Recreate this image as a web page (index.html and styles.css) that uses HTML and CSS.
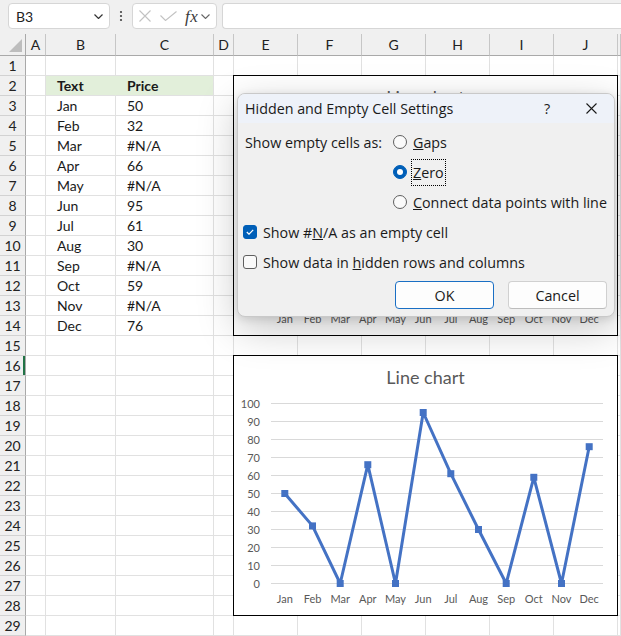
FILE: index.html
```html
<!DOCTYPE html>
<html lang="en">
<head>
<meta charset="utf-8">
<title>Hidden and Empty Cell Settings</title>
<link rel="stylesheet" href="styles.css">
</head>
<body>
<div class="app">
  <div class="fbar">
    <div class="namebox"><span>B3</span>
      <svg class="chev" width="9" height="5" viewBox="0 0 9 5"><path d="M0.5 0.5L4.5 4.5L8.5 0.5" fill="none" stroke="#333" stroke-width="1.2"/></svg>
    </div>
    <div class="vdots"><svg width="4" height="12" viewBox="0 0 4 12"><circle cx="2" cy="2" r="1.1" fill="#444"/><circle cx="2" cy="6" r="1.1" fill="#444"/><circle cx="2" cy="10" r="1.1" fill="#444"/></svg></div>
    <div class="fxbox">
      <svg class="ico-x" width="12" height="12" viewBox="0 0 12 12"><path d="M0.5 0.5L11.5 11.5M11.5 0.5L0.5 11.5" stroke="#c2c2c2" stroke-width="1.1" fill="none"/></svg>
      <svg class="ico-ok" width="17" height="10" viewBox="0 0 17 10"><path d="M0.5 4.5L5.5 9.5L16.5 0.5" stroke="#c2c2c2" stroke-width="1.1" fill="none"/></svg>
      <span class="fx">fx</span>
      <svg class="chev2" width="9" height="5" viewBox="0 0 9 5"><path d="M0.5 0.5L4.5 4.5L8.5 0.5" fill="none" stroke="#666" stroke-width="1.1"/></svg>
    </div>
    <div class="finput"></div>
  </div>

  <div class="sheet">
    <div class="row hdr"><span class="corner"><svg width="13" height="13" viewBox="0 0 13 13"><path d="M13 0V13H0Z" fill="#bdbdbd"/></svg></span><span>A</span><span>B</span><span>C</span><span>D</span><span>E</span><span>F</span><span>G</span><span>H</span><span>I</span><span>J</span><span></span></div>
    <div class="row"><span class="rh">1</span><span></span><span></span><span></span><span></span><span></span><span></span><span></span><span></span><span></span><span></span><span></span></div>
    <div class="row"><span class="rh">2</span><span></span><span class="t th fb">Text</span><span class="t th">Price</span><span></span><span></span><span></span><span></span><span></span><span></span><span></span><span></span></div>
    <div class="row"><span class="rh">3</span><span></span><span class="t">Jan</span><span class="t">50</span><span></span><span></span><span></span><span></span><span></span><span></span><span></span><span></span></div>
    <div class="row"><span class="rh">4</span><span></span><span class="t">Feb</span><span class="t">32</span><span></span><span></span><span></span><span></span><span></span><span></span><span></span><span></span></div>
    <div class="row"><span class="rh">5</span><span></span><span class="t">Mar</span><span class="t">#N/A</span><span></span><span></span><span></span><span></span><span></span><span></span><span></span><span></span></div>
    <div class="row"><span class="rh">6</span><span></span><span class="t">Apr</span><span class="t">66</span><span></span><span></span><span></span><span></span><span></span><span></span><span></span><span></span></div>
    <div class="row"><span class="rh">7</span><span></span><span class="t">May</span><span class="t">#N/A</span><span></span><span></span><span></span><span></span><span></span><span></span><span></span><span></span></div>
    <div class="row"><span class="rh">8</span><span></span><span class="t">Jun</span><span class="t">95</span><span></span><span></span><span></span><span></span><span></span><span></span><span></span><span></span></div>
    <div class="row"><span class="rh">9</span><span></span><span class="t">Jul</span><span class="t">61</span><span></span><span></span><span></span><span></span><span></span><span></span><span></span><span></span></div>
    <div class="row"><span class="rh">10</span><span></span><span class="t">Aug</span><span class="t">30</span><span></span><span></span><span></span><span></span><span></span><span></span><span></span><span></span></div>
    <div class="row"><span class="rh">11</span><span></span><span class="t">Sep</span><span class="t">#N/A</span><span></span><span></span><span></span><span></span><span></span><span></span><span></span><span></span></div>
    <div class="row"><span class="rh">12</span><span></span><span class="t">Oct</span><span class="t">59</span><span></span><span></span><span></span><span></span><span></span><span></span><span></span><span></span></div>
    <div class="row"><span class="rh">13</span><span></span><span class="t">Nov</span><span class="t">#N/A</span><span></span><span></span><span></span><span></span><span></span><span></span><span></span><span></span></div>
    <div class="row"><span class="rh">14</span><span></span><span class="t">Dec</span><span class="t">76</span><span></span><span></span><span></span><span></span><span></span><span></span><span></span><span></span></div>
    <div class="row"><span class="rh">15</span><span></span><span></span><span></span><span></span><span></span><span></span><span></span><span></span><span></span><span></span><span></span></div>
    <div class="row"><span class="rh sel">16</span><span></span><span></span><span></span><span></span><span></span><span></span><span></span><span></span><span></span><span></span><span></span></div>
    <div class="row"><span class="rh">17</span><span></span><span></span><span></span><span></span><span></span><span></span><span></span><span></span><span></span><span></span><span></span></div>
    <div class="row"><span class="rh">18</span><span></span><span></span><span></span><span></span><span></span><span></span><span></span><span></span><span></span><span></span><span></span></div>
    <div class="row"><span class="rh">19</span><span></span><span></span><span></span><span></span><span></span><span></span><span></span><span></span><span></span><span></span><span></span></div>
    <div class="row"><span class="rh">20</span><span></span><span></span><span></span><span></span><span></span><span></span><span></span><span></span><span></span><span></span><span></span></div>
    <div class="row"><span class="rh">21</span><span></span><span></span><span></span><span></span><span></span><span></span><span></span><span></span><span></span><span></span><span></span></div>
    <div class="row"><span class="rh">22</span><span></span><span></span><span></span><span></span><span></span><span></span><span></span><span></span><span></span><span></span><span></span></div>
    <div class="row"><span class="rh">23</span><span></span><span></span><span></span><span></span><span></span><span></span><span></span><span></span><span></span><span></span><span></span></div>
    <div class="row"><span class="rh">24</span><span></span><span></span><span></span><span></span><span></span><span></span><span></span><span></span><span></span><span></span><span></span></div>
    <div class="row"><span class="rh">25</span><span></span><span></span><span></span><span></span><span></span><span></span><span></span><span></span><span></span><span></span><span></span></div>
    <div class="row"><span class="rh">26</span><span></span><span></span><span></span><span></span><span></span><span></span><span></span><span></span><span></span><span></span><span></span></div>
    <div class="row"><span class="rh">27</span><span></span><span></span><span></span><span></span><span></span><span></span><span></span><span></span><span></span><span></span><span></span></div>
    <div class="row"><span class="rh">28</span><span></span><span></span><span></span><span></span><span></span><span></span><span></span><span></span><span></span><span></span><span></span></div>
    <div class="row"><span class="rh">29</span><span></span><span></span><span></span><span></span><span></span><span></span><span></span><span></span><span></span><span></span><span></span></div>
  </div>

  <svg class="defs" width="0" height="0">
    <defs>
      <symbol id="lc" viewBox="0 0 383 259">
        <text x="191.5" y="27.5" text-anchor="middle" font-family="Lato, sans-serif" font-size="18" fill="#595959">Line chart</text>
        <path d="M37 47.5H369M37 65.5H369M37 83.5H369M37 101.5H369M37 119.5H369M37 137.5H369M37 155.5H369M37 173.5H369M37 191.5H369M37 209.5H369M37 227.5H369" stroke="#d9d9d9" stroke-width="1" fill="none"/>
        <g font-family="Lato, sans-serif" font-size="11" fill="#595959" text-anchor="end">
          <text x="26" y="51.5">100</text>
          <text x="26" y="69.5">90</text>
          <text x="26" y="87.5">80</text>
          <text x="26" y="105.5">70</text>
          <text x="26" y="123.5">60</text>
          <text x="26" y="141.5">50</text>
          <text x="26" y="159.5">40</text>
          <text x="26" y="177.5">30</text>
          <text x="26" y="195.5">20</text>
          <text x="26" y="213.5">10</text>
          <text x="26" y="231.5">0</text>
        </g>
        <polyline points="50.8,137.5 78.5,169.9 106.2,227.5 133.8,108.7 161.5,227.5 189.2,56.5 216.8,117.7 244.5,173.5 272.2,227.5 299.8,121.3 327.5,227.5 355.2,90.7" fill="none" stroke="#4472c4" stroke-width="3" stroke-linejoin="round"/>
        <g fill="#4472c4">
          <rect x="47.3" y="134" width="7" height="7"/>
          <rect x="75" y="166.4" width="7" height="7"/>
          <rect x="102.7" y="224" width="7" height="7"/>
          <rect x="130.3" y="105.2" width="7" height="7"/>
          <rect x="158" y="224" width="7" height="7"/>
          <rect x="185.7" y="53" width="7" height="7"/>
          <rect x="213.3" y="114.2" width="7" height="7"/>
          <rect x="241" y="170" width="7" height="7"/>
          <rect x="268.7" y="224" width="7" height="7"/>
          <rect x="296.3" y="117.8" width="7" height="7"/>
          <rect x="324" y="224" width="7" height="7"/>
          <rect x="351.7" y="87.2" width="7" height="7"/>
        </g>
        <g font-family="Lato, sans-serif" font-size="11" fill="#595959" text-anchor="middle">
          <text x="50.8" y="247">Jan</text>
          <text x="78.5" y="247">Feb</text>
          <text x="106.2" y="247">Mar</text>
          <text x="133.8" y="247">Apr</text>
          <text x="161.5" y="247">May</text>
          <text x="189.2" y="247">Jun</text>
          <text x="216.8" y="247">Jul</text>
          <text x="244.5" y="247">Aug</text>
          <text x="272.2" y="247">Sep</text>
          <text x="299.8" y="247">Oct</text>
          <text x="327.5" y="247">Nov</text>
          <text x="355.2" y="247">Dec</text>
        </g>
      </symbol>
    </defs>
  </svg>

  <div class="chart c1"><svg width="383" height="259" viewBox="0 0 383 259"><use href="#lc"/></svg></div>
  <div class="chart c2"><svg width="383" height="259" viewBox="0 0 383 259"><use href="#lc"/></svg></div>

  <div class="dialog" role="dialog">
    <div class="dlg-title">
      <span class="dlg-name">Hidden and Empty Cell Settings</span>
      <span class="dlg-help">?</span>
      <span class="dlg-close"><svg width="11" height="11" viewBox="0 0 11 11"><path d="M0.5 0.5L10.5 10.5M10.5 0.5L0.5 10.5" stroke="#1a1a1a" stroke-width="1.1" fill="none"/></svg></span>
    </div>
    <div class="dlg-body">
      <div class="empty-opts">
        <span class="opt-label">Show empty cells as:</span>
        <span class="radio"><span class="rb"></span><span class="rl"><u>G</u>aps</span></span>
        <span class="radio on"><span class="rb"></span><span class="rl focus"><u>Z</u>ero</span></span>
        <span class="radio"><span class="rb"></span><span class="rl"><u>C</u>onnect data points with line</span></span>
      </div>
      <div class="check on"><span class="cb"><svg width="8" height="6" viewBox="0 0 8 6"><path d="M0.8 3L3 5.2L7.2 0.8" stroke="#fff" stroke-width="1.2" fill="none"/></svg></span><span>Show #<u>N</u>/A as an empty cell</span></div>
      <div class="check"><span class="cb"></span><span>Show data in <u>h</u>idden rows and columns</span></div>
      <div class="btns"><span class="btn primary">OK</span><span class="btn">Cancel</span></div>
    </div>
  </div>
</div>
</body>
</html>
```

FILE: styles.css
```css
* { box-sizing: border-box; }
html, body { margin: 0; padding: 0; }
body {
  background: #fff;
  font-family: Lato, "Liberation Sans", sans-serif;
  color: #1f1f1f;
  overflow: hidden;
}
.app {
  position: relative;
  width: 621px;
  height: 636px;
  overflow: hidden;
}

/* formula bar */
.fbar {
  height: 34px;
  background: #f0f0f0;
  display: flex;
  align-items: flex-start;
  padding: 3px 0 0 8px;
}
.namebox {
  width: 102px;
  height: 26px;
  background: #fff;
  border: 1px solid #d6d6d6;
  border-radius: 4px;
  display: flex;
  align-items: center;
  justify-content: space-between;
  padding: 0 6px 0 7px;
  font-size: 14px;
  color: #222;
}
.vdots {
  width: 22px;
  height: 26px;
  display: flex;
  align-items: center;
  justify-content: center;
}
.vdots svg { display: block; }
.fxbox {
  width: 85px;
  height: 26px;
  background: #fff;
  border: 1px solid #d6d6d6;
  border-radius: 4px;
  display: flex;
  align-items: center;
  padding-left: 6px;
}
.fxbox svg { display: block; flex: none; }
.ico-ok { margin-left: 9px; }
.fx {
  margin-left: 8px;
  font-family: "Liberation Serif", serif;
  font-style: italic;
  font-size: 17px;
  color: #3a3a3a;
  line-height: 1;
  letter-spacing: 0.5px;
}
.chev2 { margin-left: 3px; }
.finput {
  flex: 1;
  height: 26px;
  margin-left: 5px;
  background: #fff;
  border: 1px solid #d6d6d6;
  border-right: none;
  border-radius: 4px 0 0 4px;
}

/* grid */
.row {
  display: grid;
  grid-template-columns: 26px 20px 70px 98px 20px repeat(6, 64px) 1fr;
  height: 20px;
}
.row > span {
  border-right: 1px solid #e1e1e1;
  border-bottom: 1px solid #e1e1e1;
  font-size: 14px;
  line-height: 19px;
  white-space: nowrap;
  overflow: hidden;
}
.row > .rh {
  background: #f0f0f0;
  border-right-color: #a9a9a9;
  border-bottom-color: #d2d2d2;
  text-align: center;
  color: #222;
}
.row > .rh.sel { box-shadow: inset -2px 0 0 #217346; }
.row > .t { padding-left: 11px; color: #1a1a1a; }
.row > .th { background: #e2efda; font-weight: 700; }
.row > .fb { border-right-color: #e2efda; }

.hdr { height: 22px; background: #f0f0f0; }
.hdr > span {
  border-right-color: #c6c6c6;
  border-bottom: 1px solid #a9a9a9;
  text-align: center;
  line-height: 22px;
  color: #222;
}
.hdr > .corner {
  border-right-color: #a9a9a9;
  display: flex;
  align-items: flex-end;
  justify-content: flex-end;
  padding: 0 3px 3px 0;
}
.hdr > .corner svg { display: block; }

/* charts */
.defs { display: block; width: 0; height: 0; }
.chart {
  position: absolute;
  left: 233px;
  width: 385px;
  height: 261px;
  border: 1px solid #000;
  background: #fff;
}
.chart svg { display: block; }
.c1 { top: 75px; }
.c2 { top: 355px; }

/* dialog */
.dialog {
  position: absolute;
  left: 237px;
  top: 93px;
  width: 378px;
  height: 224px;
  background: #f0f0f0;
  border: 1px solid #c9c9c9;
  border-radius: 8px;
  overflow: hidden;
  box-shadow: 0 12px 40px rgba(0, 0, 0, 0.22), 0 2px 8px rgba(0, 0, 0, 0.12);
  font-family: "Open Sans", "Noto Sans", sans-serif;
  font-size: 14.3px;
  color: #1a1a1a;
}
.dlg-title {
  height: 29px;
  background: #eef2f9;
  display: flex;
  align-items: center;
  padding-left: 7px;
}
.dlg-name { flex: 1; white-space: nowrap; }
.dlg-help { width: 20px; text-align: center; margin-right: 29px; }
.dlg-close {
  width: 11px;
  margin-right: 17px;
  display: flex;
}
.dlg-close svg { display: block; }
.dlg-body { padding: 4px 0 0 7px; }
.empty-opts {
  display: grid;
  grid-template-columns: 148px 1fr;
  grid-auto-rows: 30px;
  align-items: center;
  white-space: nowrap;
}
.opt-label { grid-column: 1; grid-row: 1; }
.radio {
  grid-column: 2;
  display: flex;
  align-items: center;
}
.rb {
  width: 14px;
  height: 14px;
  border: 1px solid #5f5f5f;
  border-radius: 50%;
  background: #fafafa;
  margin-right: 5px;
  flex: none;
  display: flex;
  align-items: center;
  justify-content: center;
}
.radio.on .rb {
  background: #005fb8;
  border-color: #005fb8;
}
.radio.on .rb::after {
  content: "";
  width: 6px;
  height: 6px;
  border-radius: 50%;
  background: #fff;
}
.rl { padding: 3px 1px; line-height: 19px; white-space: nowrap; }
.focus { outline: 1px dotted #000; }
.check {
  height: 30px;
  display: flex;
  align-items: center;
  margin-left: -2px;
  white-space: nowrap;
}
.cb {
  width: 14px;
  height: 14px;
  border: 1px solid #5f5f5f;
  border-radius: 3px;
  background: #fafafa;
  margin-right: 6px;
  flex: none;
  display: flex;
  align-items: center;
  justify-content: center;
}
.check.on .cb { background: #005fb8; border-color: #005fb8; }
.cb svg { display: block; }
.btns {
  display: flex;
  justify-content: flex-end;
  gap: 14px;
  margin-top: 4px;
  padding-right: 7px;
}
.btn {
  width: 99px;
  height: 28px;
  border: 1px solid #d0d0d0;
  border-bottom-color: #bdbdbd;
  border-radius: 4px;
  background: #fdfdfd;
  display: flex;
  align-items: center;
  justify-content: center;
}
.btn.primary { border-color: #1a6fc4; }
```
